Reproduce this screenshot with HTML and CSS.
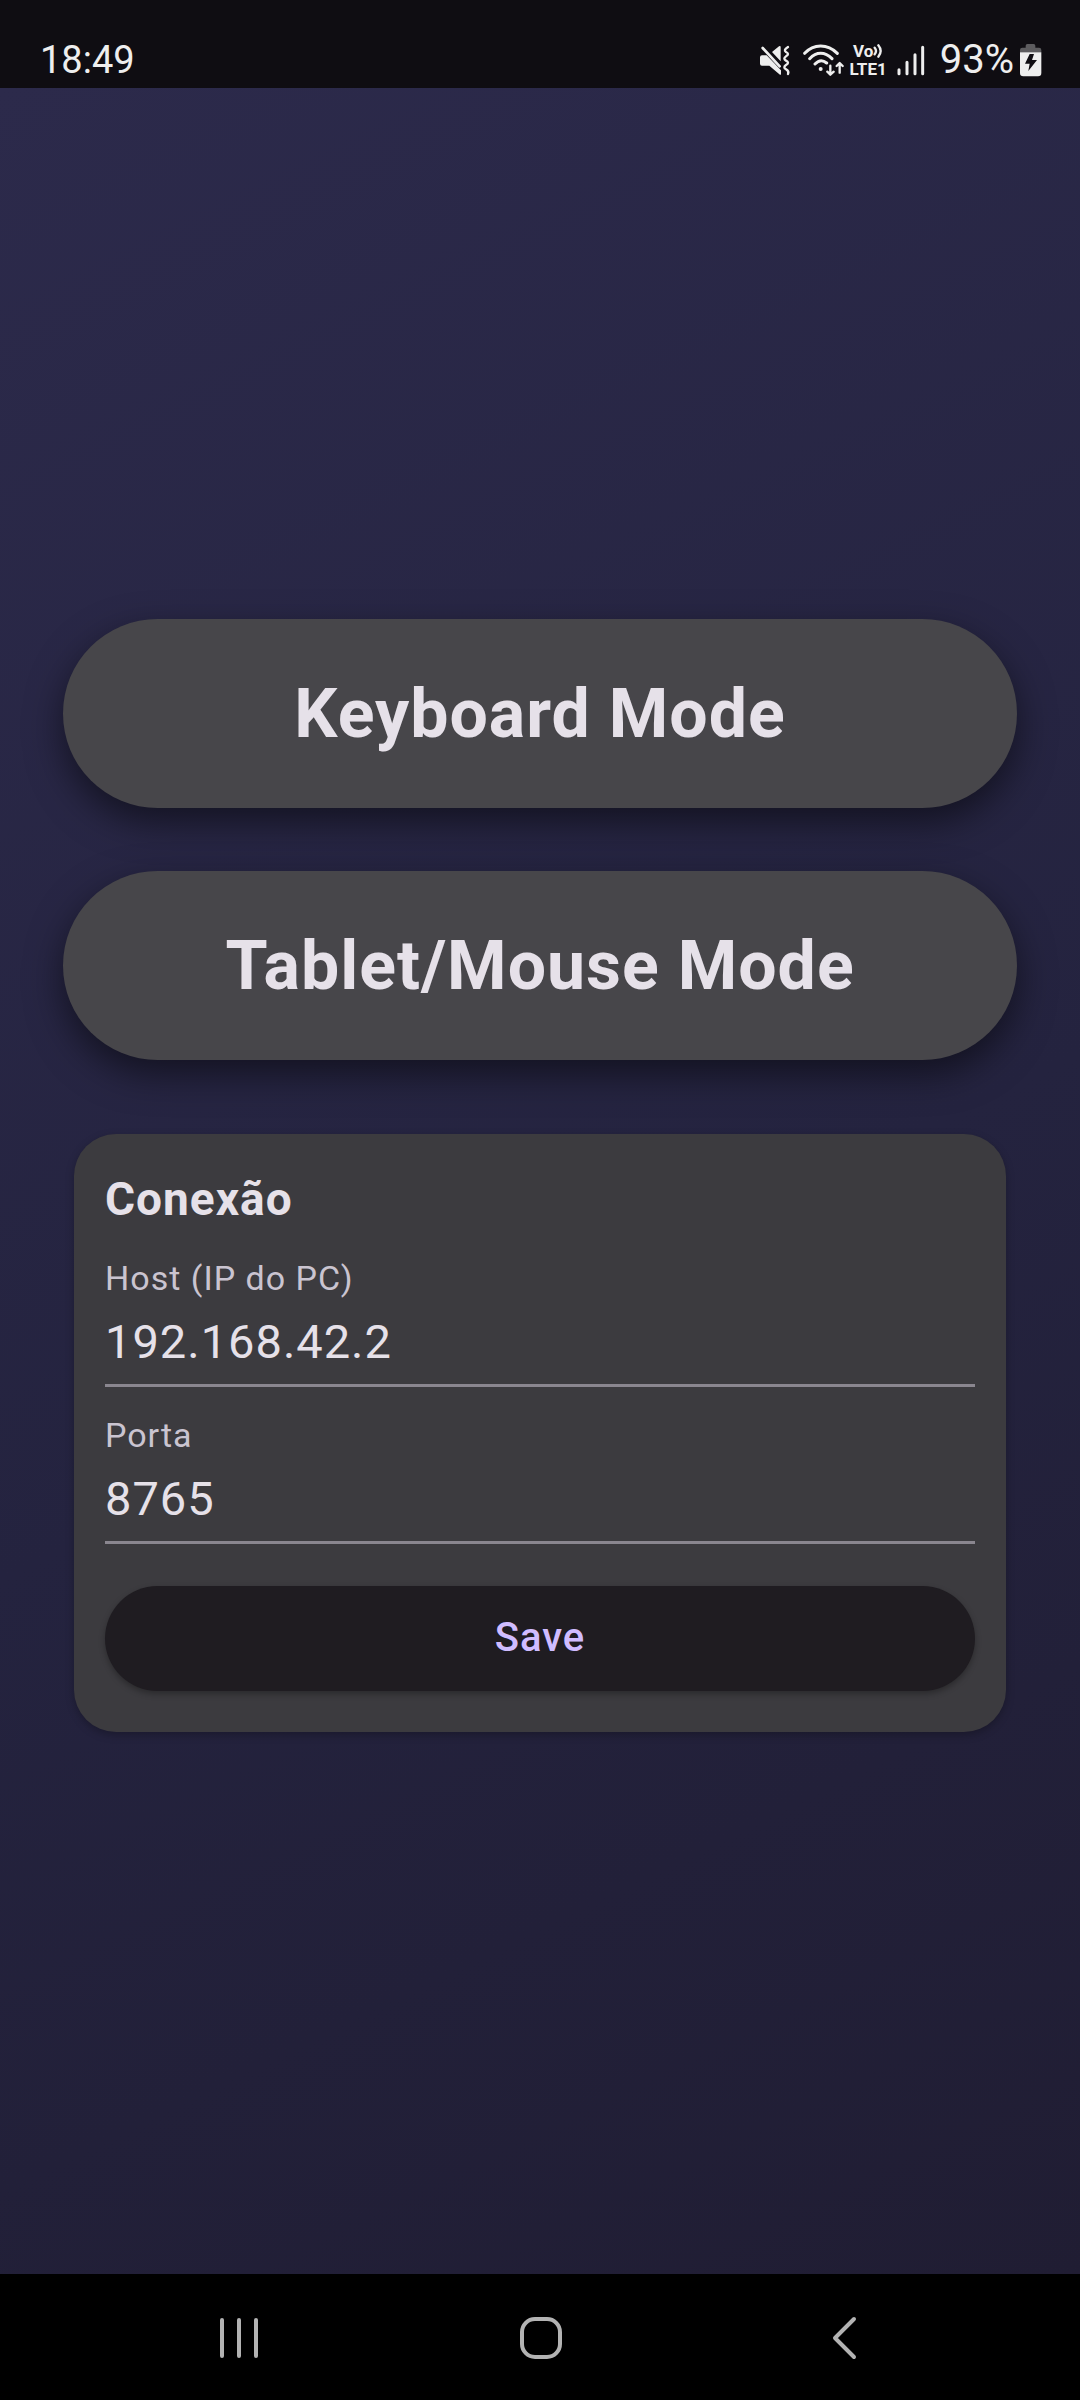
FILE: index.html
```html
<!DOCTYPE html>
<html lang="pt-BR">
<head>
<meta charset="utf-8">
<meta name="viewport" content="width=device-width, initial-scale=1">
<title>Conexão</title>
<link rel="stylesheet" href="styles.css">
</head>
<body>
<div class="screen">
  <header class="status">
    <time class="clock">18:49</time>
    <svg class="icon mute" viewBox="51 42 96 96" aria-hidden="true">
      <path class="fill" d="M60 76H74L117 121V131Q117 137 112 133L82 107H60Q54 107 54 101V82Q54 76 60 76ZM90 66L111 49Q116 46 116 52V94Z"/>
      <path class="line" d="M62 54L113 109" stroke-width="8"/>
      <path class="line" d="M138 51Q123 60 132 66Q144 72 132 79Q122 86 132 92Q144 98 132 105Q122 112 132 118Q142 124 138 132" stroke-width="7"/>
    </svg>
    <svg class="icon wifi" viewBox="183 42 123 96" aria-hidden="true">
      <path class="line" d="M188 70Q208 48 236 48T286 70M203 86Q218 70 236 70T270 86M219 102Q236 84 254 99" stroke-width="9"/>
      <circle class="fill" cx="236" cy="117" r="6"/>
      <path class="line" d="M265 107V133M256 125L265 134L275 125M293 128V101M284 108L293 99L302 108" stroke-width="7"/>
    </svg>
    <div class="volte">
      <span class="volte-row">Vo<svg class="waves" viewBox="0 0 30 42" aria-hidden="true"><path class="line" d="M5 11Q13 21 5 31M16 4Q30 21 16 38" stroke-width="7"/></svg></span>
      <span class="volte-row">LTE1</span>
    </div>
    <svg class="icon signal" viewBox="466 42 90 96" aria-hidden="true">
      <path class="line" d="M475 119V131M499 97V131M523 74V131M546 52V131" stroke-width="9"/>
    </svg>
    <span class="percent">93%</span>
    <svg class="icon battery" viewBox="840 40 69 102" aria-hidden="true">
      <path class="dim" d="M843 68V61Q843 54 850 54H860V48Q860 43 865 43H884Q889 43 889 48V54H900Q907 54 907 61V68Z"/>
      <path class="fill" d="M843 68H907V130Q907 140 897 140H853Q843 140 843 130Z"/>
      <path class="bolt" d="M872 73H885L879 91H894L868 124L872 102H858Z"/>
    </svg>
  </header>

  <main class="content">
    <button class="mode" type="button">Keyboard Mode</button>
    <button class="mode" type="button">Tablet/Mouse Mode</button>
    <form class="card">
      <h1 class="title">Conexão</h1>
      <div class="field">
        <label class="label" for="host">Host (IP do PC)</label>
        <input class="input" id="host" type="text" value="192.168.42.2">
      </div>
      <div class="field">
        <label class="label" for="port">Porta</label>
        <input class="input" id="port" type="text" inputmode="numeric" value="8765">
      </div>
      <button class="save" type="button">Save</button>
    </form>
  </main>

  <nav class="navbar">
    <button class="nav-button" type="button" aria-label="Recents">
      <svg class="nav-icon" viewBox="0 0 48 48" aria-hidden="true"><path d="M7 7V43M24 7V43M41 7V43"/></svg>
    </button>
    <button class="nav-button" type="button" aria-label="Home">
      <svg class="nav-icon" viewBox="0 0 48 48" aria-hidden="true"><rect x="6" y="6" width="38" height="38" rx="13"/></svg>
    </button>
    <button class="nav-button" type="button" aria-label="Back">
      <svg class="nav-icon" viewBox="0 0 48 48" aria-hidden="true"><path d="M37 6L18 25L37 44"/></svg>
    </button>
  </nav>
</div>
</body>
</html>
```
FILE: styles.css
```css
* {
  box-sizing: border-box;
}

body {
  margin: 0;
  font-family: Roboto, "Liberation Sans", sans-serif;
  color: #e6e1e9;
  background: #000;
}

button,
input {
  font: inherit;
  color: inherit;
  border: 0;
  margin: 0;
}

.screen {
  display: flex;
  flex-direction: column;
  min-height: 100vh;
}

/* Status bar */
.status {
  display: flex;
  align-items: center;
  padding: 32px 38px 0 40px;
  height: 88px;
  background: #0f0d12;
  color: #eeeeee;
  font-size: 38px;
  line-height: 46px;
}

.clock {
  margin-right: auto;
}

.percent {
  font-size: 40px;
}

.icon {
  flex: none;
  height: 32px;
}

.mute {
  width: 32px;
  margin-right: 12px;
}

.wifi {
  width: 41px;
  margin-right: 6px;
}

.signal {
  width: 30px;
  margin: 0 14px 0 9px;
}

.battery {
  width: 23px;
  height: 34px;
  margin-left: 5px;
}

.fill {
  fill: #eeeeee;
}

.dim {
  fill: #5c5b5e;
}

.bolt {
  fill: #0f0d12;
}

.line {
  fill: none;
  stroke: #eeeeee;
  stroke-linecap: round;
  stroke-linejoin: round;
}

.volte {
  display: flex;
  flex-direction: column;
  font-size: 17px;
  font-weight: 700;
  line-height: 18px;
}

.volte-row {
  display: flex;
  align-items: center;
  justify-content: center;
}

.waves {
  width: 10px;
  height: 14px;
}

/* App content */
.content {
  flex: 1;
  display: flex;
  flex-direction: column;
  justify-content: center;
  gap: 63px;
  padding: 0 63px;
  background: linear-gradient(154deg, #2c2a4b, #24233f 55%, #201d33);
}

.mode {
  height: 189px;
  border-radius: 95px;
  background: #47464a;
  font-size: 68px;
  font-weight: 700;
  letter-spacing: 1px;
  box-shadow: 0 14px 36px rgba(0, 0, 0, 0.5);
}

.card {
  display: flex;
  flex-direction: column;
  gap: 29px;
  margin: 11px;
  padding: 34px 31px 41px;
  border-radius: 42px;
  background: #3c3b3f;
  box-shadow: 0 3px 8px rgba(0, 0, 0, 0.25);
}

.title {
  margin: 0;
  font-size: 46px;
  font-weight: 700;
  line-height: 62px;
  letter-spacing: 1px;
}

.field {
  display: flex;
  flex-direction: column;
}

.label {
  font-size: 34px;
  line-height: 39px;
  letter-spacing: 1px;
  color: #cac4d0;
}

.input {
  width: 100%;
  height: 89px;
  padding: 0;
  border-bottom: 3px solid #8a868f;
  border-radius: 0;
  background: transparent;
  font-size: 47px;
  letter-spacing: 1px;
  outline: none;
}

.save {
  height: 105px;
  margin-top: 13px;
  padding: 0 0 2px;
  border-radius: 53px;
  background: #1f1c21;
  color: #d0bcff;
  font-size: 40px;
  font-weight: 500;
  letter-spacing: 1px;
  box-shadow: 0 3px 6px rgba(0, 0, 0, 0.3);
}

/* System navigation */
.navbar {
  display: grid;
  grid-template-columns: repeat(3, 1fr);
  height: 126px;
  padding: 0 88px;
  background: #000;
}

.nav-button {
  display: grid;
  place-items: center;
  background: transparent;
}

.nav-icon {
  width: 48px;
  height: 48px;
  fill: none;
  stroke: #b3b3b3;
  stroke-width: 4;
  stroke-linecap: round;
  stroke-linejoin: round;
}
```
